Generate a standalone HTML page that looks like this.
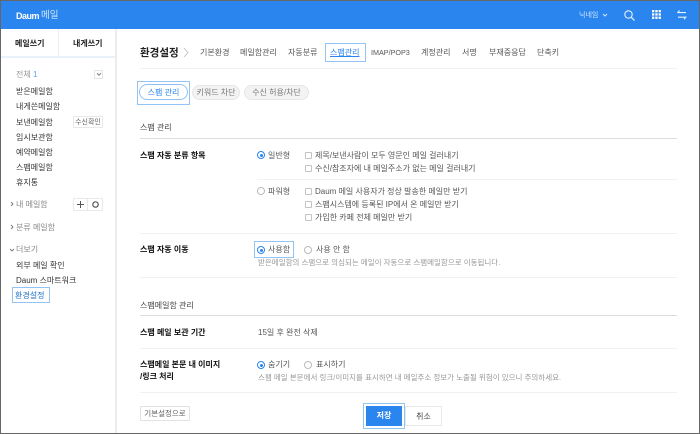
<!DOCTYPE html>
<html lang="ko"><head><meta charset="utf-8"><title>환경설정</title>
<style>
html,body{margin:0;padding:0;background:#fff}
#p{position:relative;width:700px;height:434px;overflow:hidden;background:#fff;font-family:"Liberation Sans","Noto Sans CJK KR",sans-serif;font-size:8px;color:#333}
#p div{position:absolute}
#w{left:0;top:0;width:700px;height:434px;filter:blur(.3px)}
.t{white-space:nowrap;line-height:12px;height:12px;transform:translateY(-4px)}
.b{color:#111;font-weight:700}
.g{color:#555}
.l{color:#999;font-size:7.5px}
.hl{border:1.5px solid #94c3f6;box-sizing:border-box}
.cb{box-sizing:border-box;width:7px;height:7px;border:1px solid #c4c4c4;background:#fff;border-radius:1px}
.r{box-sizing:border-box;width:8px;height:8px;border:1px solid #bbb;border-radius:50%;background:#fff}
.r.on{border-color:#2a85ee}
.r.on:after{content:"";position:absolute;left:1.5px;top:1.5px;width:3px;height:3px;border-radius:50%;background:#2a85ee}
.pill{box-sizing:border-box;height:15px;border-radius:8px;background:#f3f3f3;border:1px solid #e6e6e6;color:#777;text-align:center;line-height:14px}
.line{height:1px;background:#eee}
</style></head><body>
<div id="p">
<div id="w">
<div style="left:0;top:0;width:700px;height:29px;background:#2a85ee"></div>
<div class="t" style="left:16px;top:14px;color:#fff;font-weight:700;font-size:9px;letter-spacing:-.5px">Daum</div>
<div class="t" style="left:41px;top:14px;color:#d5e7fc;font-size:9.500px">메일</div>
<div class="t" style="left:579px;top:14px;color:#d5e7fc;font-size:7px">닉네임</div>
<svg style="position:absolute;left:602px;top:13px" width="6" height="4"><path d="M1 1l2 2 2-2" fill="none" stroke="#d5e7fc"/></svg>
<svg style="position:absolute;left:623px;top:9px" width="13" height="13"><circle cx="5.500" cy="5.500" r="3.700" fill="none" stroke="#e8f2fe" stroke-width="1.100"/><path d="M8.300 8.300l3.200 3.200" stroke="#e8f2fe" stroke-width="1.200"/></svg>
<svg style="position:absolute;left:652px;top:10px" width="9" height="9" fill="#fff"><rect width="2.300" height="2.300"/><rect x="3.300" width="2.300" height="2.300"/><rect x="6.600" width="2.300" height="2.300"/><rect y="3.300" width="2.300" height="2.300"/><rect x="3.300" y="3.300" width="2.300" height="2.300"/><rect x="6.600" y="3.300" width="2.300" height="2.300"/><rect y="6.600" width="2.300" height="2.300"/><rect x="3.300" y="6.600" width="2.300" height="2.300"/><rect x="6.600" y="6.600" width="2.300" height="2.300"/></svg>
<svg style="position:absolute;left:677px;top:10px" width="10" height="10"><path d="M2.500 .5L.8 2.600H9M7 9.300l1.800-2.100H1" fill="none" stroke="#e8f2fe" stroke-width="1.100"/></svg>

<div style="left:115px;top:29px;width:2px;height:405px;background:#ececec"></div>
<div style="left:0;top:56px;width:115px;height:2px;background:#e9f1fb"></div>
<div style="left:58px;top:29px;width:1px;height:27px;background:#eee"></div>
<div class="t b" style="left:15px;top:42px;color:#222">메일쓰기</div>
<div class="t b" style="left:73px;top:42px;color:#222">내게쓰기</div>
<div class="t" style="left:16px;top:73px;color:#999">전체 <span style="color:#5aa0ee">1</span></div>
<div style="left:94px;top:70px;box-sizing:border-box;width:9px;height:9px;border:1px solid #e4e4e4;border-radius:1px"></div>
<svg style="position:absolute;left:96px;top:72px" width="6" height="5"><path d="M1 1.200l2 2 2-2" fill="none" stroke="#777"/></svg>
<div class="t" style="left:16px;top:90px">받은메일함</div>
<div class="t" style="left:16px;top:105px">내게쓴메일함</div>
<div class="t" style="left:16px;top:121px">보낸메일함</div>
<div style="left:73px;top:116px;box-sizing:border-box;width:30px;height:12px;border:1px solid #e8e8e8;border-radius:1px;text-align:center;line-height:11px;font-size:7px;color:#666">수신확인</div>
<div class="t" style="left:16px;top:136px">임시보관함</div>
<div class="t" style="left:16px;top:151px">예약메일함</div>
<div class="t" style="left:16px;top:166px">스팸메일함</div>
<div class="t" style="left:16px;top:181px">휴지통</div>
<svg style="position:absolute;left:10px;top:201px" width="4" height="6"><path d="M1 1l2 2-2 2" fill="none" stroke="#777" stroke-width=".9"/></svg>
<div class="t" style="left:16px;top:203px;color:#888">내 메일함</div>
<div style="left:73px;top:198px;box-sizing:border-box;width:30px;height:13px;border:1px solid #e8e8e8;border-radius:1px"></div>
<div style="left:87px;top:199px;width:1px;height:11px;background:#e8e8e8"></div>
<svg style="position:absolute;left:76px;top:200px" width="9" height="9"><path d="M4.500 1v7M1 4.500h7" stroke="#555"/></svg>
<svg style="position:absolute;left:91px;top:200px" width="9" height="9"><circle cx="4.500" cy="4.500" r="2.700" fill="none" stroke="#555" stroke-width="1.200"/></svg>
<svg style="position:absolute;left:10px;top:224px" width="4" height="6"><path d="M1 1l2 2-2 2" fill="none" stroke="#777" stroke-width=".9"/></svg>
<div class="t" style="left:16px;top:226px;color:#888">분류 메일함</div>
<svg style="position:absolute;left:9px;top:248px" width="6" height="4"><path d="M1 1l2 2 2-2" fill="none" stroke="#777" stroke-width=".9"/></svg>
<div class="t" style="left:16px;top:248px;color:#888">더보기</div>
<div class="t" style="left:16px;top:264px">외부 메일 확인</div>
<div class="t" style="left:16px;top:279px">Daum 스마트워크</div>
<div class="hl" style="left:12px;top:287px;width:38px;height:16px"></div>
<div class="t" style="left:15px;top:294px;color:#1f6fc8">환경설정</div>

<div class="t b" style="left:140px;top:51px;font-size:10.500px;color:#222">환경설정</div>
<svg style="position:absolute;left:183px;top:47px" width="6" height="11"><path d="M1 1l4 4.500-4 4.500" fill="none" stroke="#bbb" stroke-width=".8"/></svg>
<div class="t g" style="left:200px;top:51px">기본환경</div>
<div class="t g" style="left:240px;top:51px">메일함관리</div>
<div class="t g" style="left:288px;top:51px">자동분류</div>
<div class="hl" style="left:325px;top:43px;width:41px;height:19px"></div>
<div class="t" style="left:330px;top:51px;color:#2a85ee;text-decoration:underline">스팸관리</div>
<div class="t g" style="left:371px;top:51px;font-size:7.200px">IMAP/POP3</div>
<div class="t g" style="left:421px;top:51px">계정관리</div>
<div class="t g" style="left:462px;top:51px">서명</div>
<div class="t g" style="left:489px;top:51px">부재중응답</div>
<div class="t g" style="left:537px;top:51px">단축키</div>
<div style="left:140px;top:68px;width:537px;height:1px;background:#f2f2f2"></div>

<div class="hl" style="left:137px;top:81px;width:53px;height:24px"></div>
<div class="pill" style="left:139px;top:84px;width:49px;height:16px;background:#fff;border-color:#8fc0f5;color:#2a85ee;line-height:15px">스팸 관리</div>
<div class="pill" style="left:192px;top:85px;width:48px">키워드 차단</div>
<div class="pill" style="left:244px;top:85px;width:65px">수신 허용/차단</div>

<div class="t" style="left:140px;top:126px;color:#444">스팸 관리</div>
<div style="left:140px;top:138px;width:537px;height:1px;background:#ddd"></div>
<div class="t b" style="left:140px;top:154px">스팸 자동 분류 항목</div>
<div class="r on" style="left:257px;top:151px"></div>
<div class="t g" style="left:268px;top:154px">일반형</div>
<div class="cb" style="left:305px;top:152px"></div>
<div class="t g" style="left:315px;top:154px">제목/보낸사람이 모두 영문인 메일 걸러내기</div>
<div class="cb" style="left:305px;top:165px"></div>
<div class="t g" style="left:315px;top:167px">수신/참조자에 내 메일주소가 없는 메일 걸러내기</div>
<div class="line" style="left:257px;top:179px;width:420px;background:#f2f2f2"></div>
<div class="r" style="left:257px;top:187px"></div>
<div class="t g" style="left:268px;top:190px">파워형</div>
<div class="cb" style="left:305px;top:188px"></div>
<div class="t g" style="left:315px;top:190px">Daum 메일 사용자가 정상 발송한 메일만 받기</div>
<div class="cb" style="left:305px;top:201px"></div>
<div class="t g" style="left:315px;top:203px">스팸시스템에 등록된 IP에서 온 메일만 받기</div>
<div class="cb" style="left:305px;top:214px"></div>
<div class="t g" style="left:315px;top:216px">가입한 카페 전체 메일만 받기</div>
<div class="line" style="left:140px;top:233px;width:537px;background:#f2f2f2"></div>

<div class="t b" style="left:140px;top:248px">스팸 자동 이동</div>
<div class="hl" style="left:254px;top:241px;width:40px;height:17px"></div>
<div class="r on" style="left:257px;top:246px"></div>
<div class="t g" style="left:268px;top:248px">사용함</div>
<div class="r" style="left:304px;top:246px"></div>
<div class="t g" style="left:316px;top:248px">사용 안 함</div>
<div class="t l" style="left:258px;top:261px">받은메일함의 스팸으로 의심되는 메일이 자동으로 스팸메일함으로 이동됩니다.</div>
<div class="line" style="left:140px;top:277px;width:537px;background:#f2f2f2"></div>

<div class="t" style="left:140px;top:304px;color:#444">스팸메일함 관리</div>
<div style="left:140px;top:315px;width:537px;height:1px;background:#ddd"></div>
<div class="t b" style="left:140px;top:331px">스팸 메일 보관 기간</div>
<div class="t g" style="left:258px;top:331px">15일 후 완전 삭제</div>
<div class="line" style="left:140px;top:348px;width:537px;background:#f2f2f2"></div>
<div class="t b" style="left:140px;top:363px">스팸메일 본문 내 이미지</div>
<div class="t b" style="left:140px;top:375px">/링크 처리</div>
<div class="r on" style="left:257px;top:361px"></div>
<div class="t g" style="left:268px;top:363px">숨기기</div>
<div class="r" style="left:304px;top:361px"></div>
<div class="t g" style="left:316px;top:363px">표시하기</div>
<div class="t l" style="left:258px;top:376px">스팸 메일 본문에서 링크/이미지를 표시하면 내 메일주소 정보가 노출될 위험이 있으니 주의하세요.</div>
<div class="line" style="left:140px;top:392px;width:537px;background:#f2f2f2"></div>

<div style="left:140px;top:406px;box-sizing:border-box;width:50px;height:15px;border:1px solid #e2e2e2;border-radius:1px;text-align:center;line-height:14px;color:#666;font-size:7.500px">기본설정으로</div>
<div class="hl" style="left:363px;top:403px;width:42px;height:26px"></div>
<div style="left:366px;top:406px;width:36px;height:20px;background:#2a85ee;color:#fff;font-weight:700;text-align:center;line-height:20px">저장</div>
<div style="left:405px;top:406px;box-sizing:border-box;width:37px;height:20px;border:1px solid #e8e8e8;text-align:center;line-height:19px;color:#444">취소</div>
</div>
<div style="left:0;top:0;width:700px;height:434px;box-sizing:border-box;border:1px solid #666;pointer-events:none"></div>
</div>
</body></html>
